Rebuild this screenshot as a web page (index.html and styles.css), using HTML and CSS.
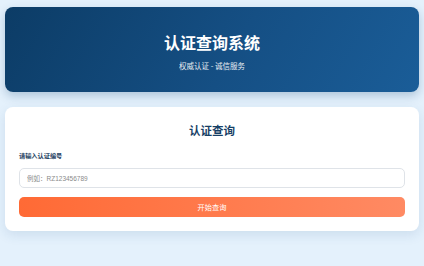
FILE: index.html
```html
<!DOCTYPE html>
<html lang="zh">
<head>
<meta charset="utf-8">
<title>认证查询系统</title>
<link rel="stylesheet" href="styles.css">
</head>
<body>
<div class="page">
  <header class="hero">
    <h1 class="hero-title">认证查询系统</h1>
    <p class="hero-sub">权威认证 - 诚信服务</p>
  </header>
  <section class="card">
    <h2 class="card-title">认证查询</h2>
    <label class="field-label" for="code">请输入认证编号</label>
    <input class="field-input" id="code" type="text" placeholder="例如：RZ123456789">
    <button class="btn" type="button">开始查询</button>
  </section>
</div>
</body>
</html>
```
FILE: styles.css
```css
* { box-sizing: border-box; }
html, body { margin: 0; padding: 0; }
body {
  background: #e4f1fc;
  font-family: "Noto Sans CJK SC", "Noto Sans", sans-serif;
  width: 424px;
  height: 266px;
  overflow: hidden;
}
.page {
  padding: 7px 5px 0;
  display: flex;
  flex-direction: column;
  gap: 15px;
}
.hero {
  height: 85px;
  border-radius: 8px;
  background: linear-gradient(120deg, #0c3c66 0%, #154f84 55%, #1a5d98 100%);
  box-shadow: 0 4px 10px rgba(20, 70, 120, 0.25);
  color: #fff;
  display: flex;
  flex-direction: column;
  align-items: center;
  padding-top: 25px;
}
.hero-title {
  margin: 0;
  font-size: 16px;
  line-height: 20px;
  font-weight: 700;
}
.hero-sub {
  margin: 9px 0 0;
  font-size: 7.5px;
  line-height: 10px;
  opacity: 0.9;
}
.card {
  background: #fff;
  border-radius: 8px;
  box-shadow: 0 4px 12px rgba(30, 80, 130, 0.12);
  padding: 15px 14px 14px;
  display: flex;
  flex-direction: column;
}
.card-title {
  margin: 0;
  text-align: center;
  font-size: 11.5px;
  line-height: 16px;
  font-weight: 700;
  color: #173f66;
}
.field-label {
  margin-top: 14px;
  font-size: 6.2px;
  line-height: 8px;
  font-weight: 700;
  color: #1f3f63;
}
.field-input {
  margin-top: 8px;
  height: 20px;
  width: 100%;
  border: 1px solid #dfe3e8;
  border-radius: 5px;
  padding: 0 7px;
  font-family: "Liberation Sans", "Noto Sans CJK SC", sans-serif;
  font-size: 6.5px;
  color: #333;
  outline: none;
  background: #fff;
}
.field-input::placeholder { color: #8a8a8a; }
.btn {
  margin-top: 9px;
  height: 20px;
  width: 100%;
  border: none;
  border-radius: 5px;
  background: linear-gradient(90deg, #ff6a35 0%, #ff8a63 100%);
  color: #fff;
  font-family: "Noto Sans CJK SC", "Noto Sans", sans-serif;
  font-size: 7.2px;
  padding: 0;
}
```
